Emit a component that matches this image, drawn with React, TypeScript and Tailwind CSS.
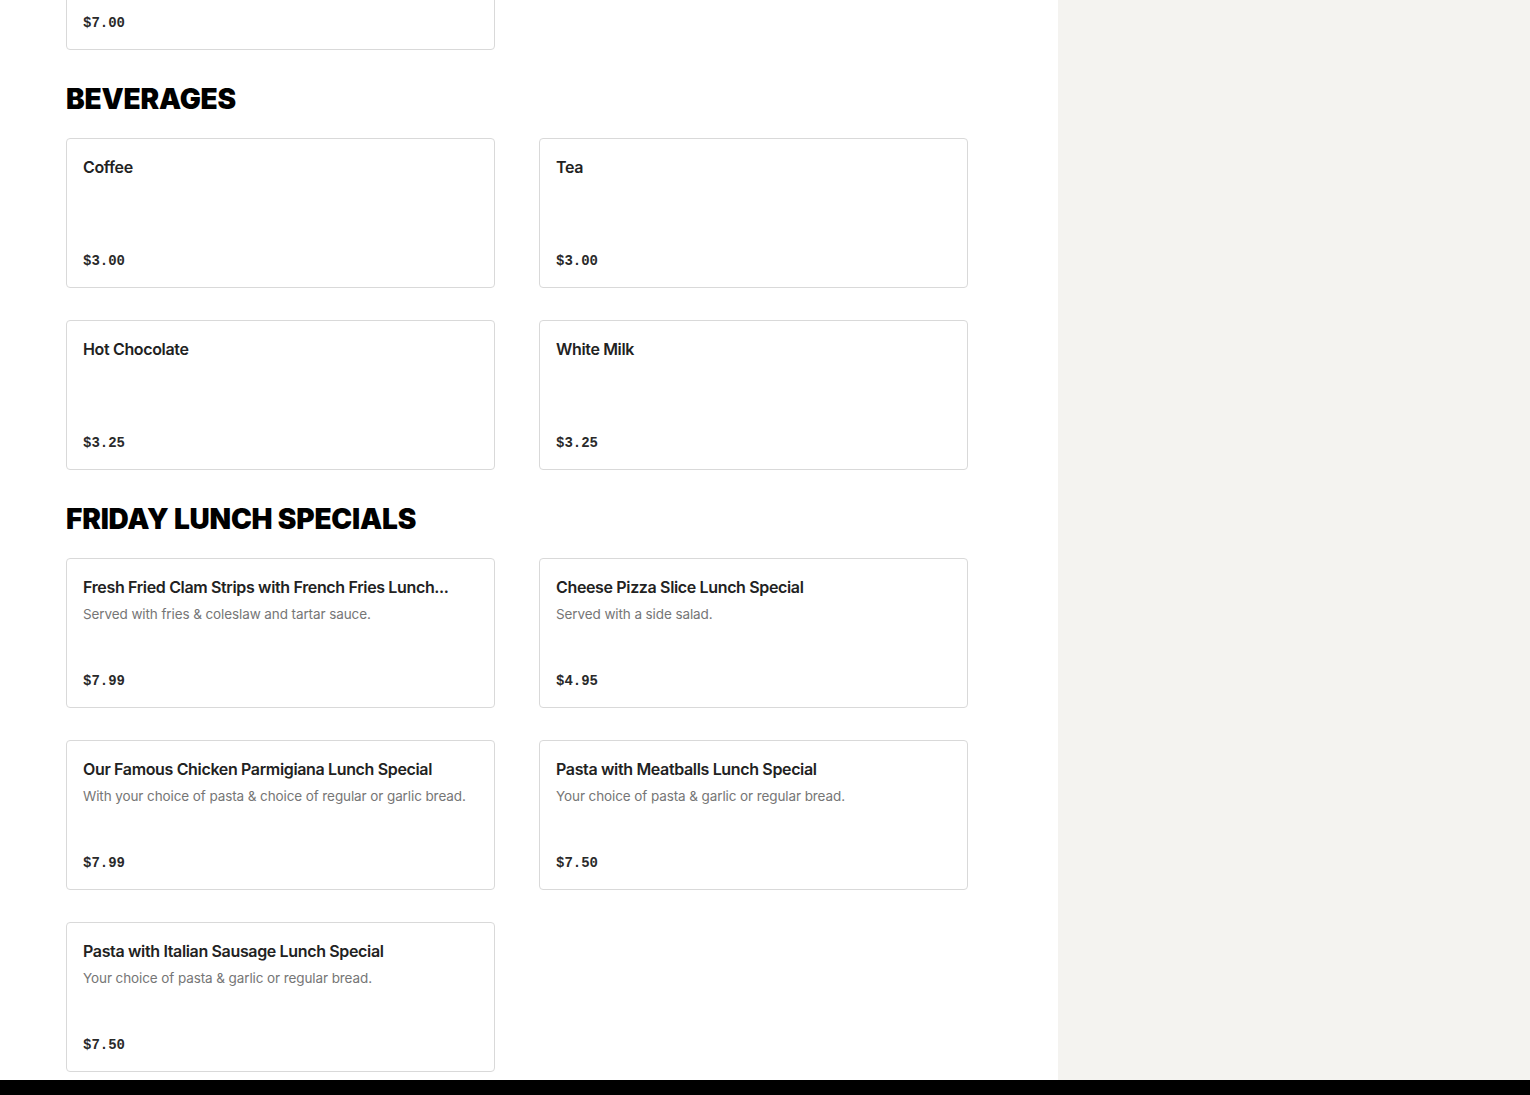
import React from "react";

type Item = { name: string; desc?: string; price: string };

const beverages: Item[] = [
  { name: "Coffee", price: "$3.00" },
  { name: "Tea", price: "$3.00" },
  { name: "Hot Chocolate", price: "$3.25" },
  { name: "White Milk", price: "$3.25" },
];

const specials: Item[] = [
  {
    name: "Fresh Fried Clam Strips with French Fries Lunch...",
    desc: "Served with fries & coleslaw and tartar sauce.",
    price: "$7.99",
  },
  { name: "Cheese Pizza Slice Lunch Special", desc: "Served with a side salad.", price: "$4.95" },
  {
    name: "Our Famous Chicken Parmigiana Lunch Special",
    desc: "With your choice of pasta & choice of regular or garlic bread.",
    price: "$7.99",
  },
  {
    name: "Pasta with Meatballs Lunch Special",
    desc: "Your choice of pasta & garlic or regular bread.",
    price: "$7.50",
  },
  {
    name: "Pasta with Italian Sausage Lunch Special",
    desc: "Your choice of pasta & garlic or regular bread.",
    price: "$7.50",
  },
];

const priceCls =
  "font-['Liberation_Mono',monospace] text-[14px] font-bold leading-5 text-[#2a2a2a]";

function Card({ item }: { item: Item }) {
  return (
    <div className="flex h-[150px] flex-col justify-between rounded-[4px] border border-[#d9d9d9] bg-white p-4">
      <div className="min-w-0">
        <div className="whitespace-nowrap font-['Inter',sans-serif] text-[16px] font-semibold leading-6 tracking-[-0.35px] text-[#222222]">
          {item.name}
        </div>
        {item.desc && (
          <div className="mt-[5px] whitespace-nowrap font-['Inter',sans-serif] text-[13.5px] leading-5 tracking-[-0.1px] text-[#767676]">
            {item.desc}
          </div>
        )}
      </div>
      <div className={priceCls}>{item.price}</div>
    </div>
  );
}

function Section({ title, items }: { title: string; items: Item[] }) {
  return (
    <section className="mt-[35px]">
      <h2 className="font-['Inter',sans-serif] text-[28px] font-black uppercase leading-[28px] tracking-[-0.2px] text-black">
        {title}
      </h2>
      <div className="mt-[25px] grid w-[902px] grid-cols-2 gap-x-[44px] gap-y-8">
        {items.map((it) => (
          <Card key={it.name} item={it} />
        ))}
      </div>
    </section>
  );
}

export default function App() {
  return (
    <div className="flex h-[1095px] flex-col overflow-hidden bg-white">
      <div className="flex h-[1080px] overflow-hidden">
        <main className="w-[1058px] shrink-0 overflow-hidden pl-[66px]">
          <div className="-mt-[100px] w-[429px]">
            <div className="flex h-[150px] flex-col justify-end rounded-[4px] border border-[#d9d9d9] bg-white p-4">
              <div className={priceCls}>$7.00</div>
            </div>
          </div>
          <Section title="Beverages" items={beverages} />
          <Section title="Friday Lunch Specials" items={specials} />
        </main>
        <aside className="flex-1 bg-[#f4f3f0]" />
      </div>
      <div className="h-[15px] bg-black" />
    </div>
  );
}
